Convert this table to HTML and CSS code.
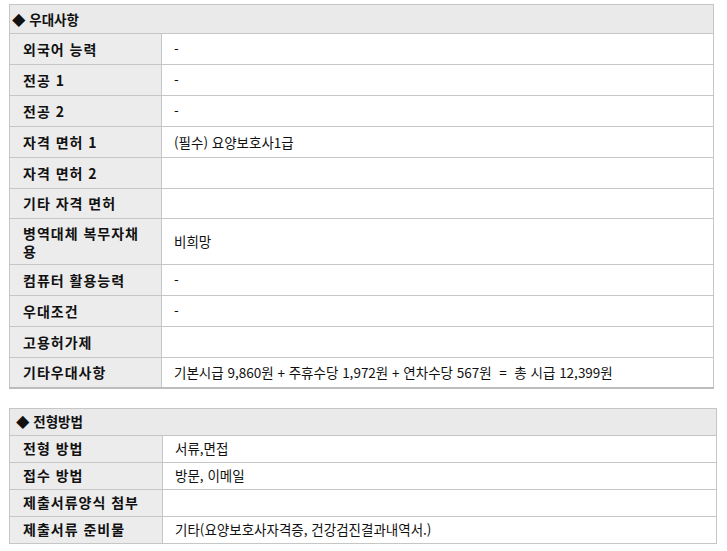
FILE: index.html
```html
<!DOCTYPE html>
<html lang="ko">
<head>
<meta charset="utf-8">
<title>우대사항</title>
<link rel="stylesheet" href="styles.css">
</head>
<body>
<div class="page">
  <table class="info info-first">
    <colgroup><col class="col-label"><col></colgroup>
    <tr class="head"><th colspan="2">◆ 우대사항</th></tr>
    <tr><th>외국어 능력</th><td>-</td></tr>
    <tr><th>전공 1</th><td>-</td></tr>
    <tr><th>전공 2</th><td>-</td></tr>
    <tr><th>자격 면허 1</th><td>(필수) 요양보호사1급</td></tr>
    <tr><th>자격 면허 2</th><td></td></tr>
    <tr class="short"><th>기타 자격 면허</th><td></td></tr>
    <tr class="tall"><th>병역대체 복무자채<br>용</th><td>비희망</td></tr>
    <tr><th>컴퓨터 활용능력</th><td>-</td></tr>
    <tr><th>우대조건</th><td>-</td></tr>
    <tr><th>고용허가제</th><td></td></tr>
    <tr class="short"><th>기타우대사항</th><td>기본시급 9,860원 + 주휴수당 1,972원 + 연차수당 567원 &nbsp;= &nbsp;총 시급 12,399원</td></tr>
  </table>

  <table class="info info-second">
    <colgroup><col class="col-label2"><col></colgroup>
    <tr class="head"><th colspan="2">◆ 전형방법</th></tr>
    <tr><th>전형 방법</th><td>서류,면접</td></tr>
    <tr><th>접수 방법</th><td>방문, 이메일</td></tr>
    <tr><th>제출서류양식 첨부</th><td></td></tr>
    <tr><th>제출서류 준비물</th><td>기타(요양보호사자격증, 건강검진결과내역서.)</td></tr>
  </table>
</div>
</body>
</html>
```

FILE: styles.css
```css
html, body {
  margin: 0;
  padding: 0;
  background: #ffffff;
}

.page {
  padding: 4px 0 0 9px;
  font-family: "Noto Sans CJK KR", "Noto Sans", sans-serif;
  font-size: 13.5px;
  color: #111111;
}

.info {
  border-collapse: collapse;
  table-layout: fixed;
  border: 1px solid #c6c6c6;
}

.info-first {
  width: 705px;
  border-bottom: 2px solid #bdbdbd;
}

.info-second {
  width: 708px;
  margin-top: 19px;
}

.col-label { width: 152px; }
.col-label2 { width: 153px; }

.info th,
.info td {
  border: 1px solid #c6c6c6;
  text-align: left;
  vertical-align: middle;
  line-height: 17px;
  padding: 0 12px;
}

.info th {
  background: #ececec;
  font-weight: bold;
  font-size: 14px;
  padding-left: 13px;
  letter-spacing: 1px;
}

.info td {
  background: #ffffff;
  font-weight: normal;
}

.info-first tr { height: 31px; }
.info-first tr.head { height: 29px; }
.info-first tr.short { height: 30px; }
.info-first tr.tall { height: 46px; }
.info-first tr.tall th { line-height: 18px; }

.info-second tr { height: 27px; }

.info tr.head th {
  background: #eaeaea;
  font-size: 13.5px;
  padding-left: 2px;
  letter-spacing: 0;
}

.info-second tr.head th {
  padding-left: 6px;
}
```
